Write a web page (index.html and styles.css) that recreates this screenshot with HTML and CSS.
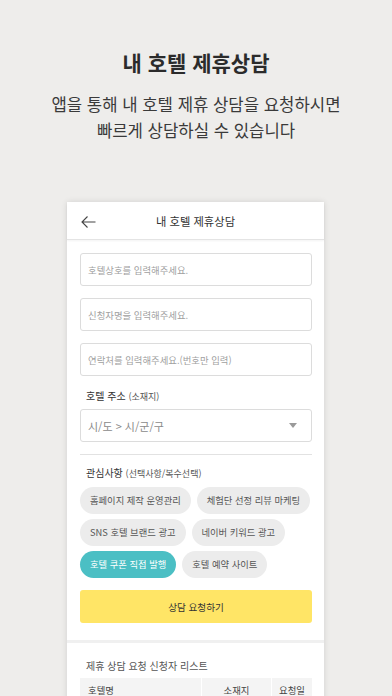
FILE: index.html
```html
<!DOCTYPE html>
<html lang="ko">
<head>
    <meta charset="UTF-8">
    <meta name="viewport" content="width=device-width, initial-scale=1.0">
    <title>내 호텔 제휴상담</title>
    <link rel="stylesheet" href="styles.css">
</head>
<body>
    <div class="intro">
        <h1>내 호텔 제휴상담</h1>
        <p>앱을 통해 내 호텔 제휴 상담을 요청하시면<br>빠르게 상담하실 수 있습니다</p>
    </div>

    <div class="phone">
        <div class="phone-header">
            <svg class="back" width="15" height="12" viewBox="0 0 15 12">
                <path d="M14.5 6H1M6.5 0.5L1 6l5.5 5.5" fill="none" stroke="#444" stroke-width="1.1"/>
            </svg>
            <span>내 호텔 제휴상담</span>
        </div>

        <div class="form">
            <div class="field">호텔상호를 입력해주세요.</div>
            <div class="field">신청자명을 입력해주세요.</div>
            <div class="field">연락처를 입력해주세요.(번호만 입력)</div>

            <div class="label">호텔 주소 <small>(소재지)</small></div>
            <div class="field select">
                <span>시/도 &gt; 시/군/구</span>
                <svg width="8" height="5" viewBox="0 0 8 5"><path d="M0 0h8L4 5z" fill="#9a9a9a"/></svg>
            </div>

            <div class="divider"></div>

            <div class="label">관심사항 <small>(선택사항/복수선택)</small></div>
            <div class="chips">
                <span class="chip">홈페이지 제작 운영관리</span>
                <span class="chip">체험단 선정 리뷰 마케팅</span>
                <span class="chip">SNS 호텔 브랜드 광고</span>
                <span class="chip">네이버 키워드 광고</span>
                <span class="chip active">호텔 쿠폰 직접 발행</span>
                <span class="chip">호텔 예약 사이트</span>
            </div>

            <button class="submit">상담 요청하기</button>
        </div>

        <div class="list">
            <div class="list-title">제휴 상담 요청 신청자 리스트</div>
            <div class="table">
                <div class="th name">호텔명</div>
                <div class="th place">소재지</div>
                <div class="th date">요청일</div>
            </div>
        </div>
    </div>
</body>
</html>
```

FILE: styles.css
```css
body {
    margin: 0;
    background: #eeedeb;
    font-family: "Noto Sans CJK KR", "Noto Sans", sans-serif;
    color: #333;
    height: 696px;
    overflow: hidden;
}

.intro {
    text-align: center;
    padding-top: 46px;
}

.intro h1 {
    margin: 0;
    font-size: 21px;
    line-height: 32px;
    font-weight: 700;
    color: #2b2b2b;
}

.intro p {
    margin: 13px 0 0;
    font-size: 16.7px;
    line-height: 26px;
    color: #3a3a3a;
}

.phone {
    width: 257px;
    margin: 59px 0 0 67px;
    background: #fff;
    box-shadow: 0 0 6px rgba(0, 0, 0, 0.12);
    height: 560px;
}

.phone-header {
    height: 37px;
    border-bottom: 1px solid #e4e4e4;
    box-shadow: 0 1px 2px rgba(0, 0, 0, 0.05);
    display: flex;
    align-items: center;
    justify-content: center;
    position: relative;
    font-size: 11.3px;
    color: #333;
}

.back {
    position: absolute;
    left: 14px;
    top: 14px;
}

.form {
    padding: 13px 12px 17px 13px;
    display: flex;
    flex-direction: column;
}

.field {
    height: 31px;
    border: 1px solid #dcdcdc;
    border-radius: 3px;
    margin-bottom: 12px;
    padding: 0 7px;
    display: flex;
    align-items: center;
    font-size: 9.4px;
    color: #a0a0a0;
}

.select {
    justify-content: space-between;
    font-size: 11px;
    color: #8a8a8a;
    padding-right: 14px;
}

.label {
    font-size: 10px;
    line-height: 16px;
    color: #333;
    margin: 0 0 4px 6px;
}

.label small {
    font-size: 9px;
    color: #555;
}

.divider {
    height: 1px;
    background: #e2e2e2;
    margin-bottom: 10px;
}

.divider + .label {
    margin-bottom: 5px;
}

.chips {
    display: flex;
    flex-wrap: wrap;
    gap: 5px 6px;
    margin-bottom: 12px;
}

.chip {
    height: 27px;
    line-height: 27px;
    padding: 0 10px;
    border-radius: 14px;
    background: #ececec;
    font-size: 9.3px;
    color: #555;
}

.chip.active {
    background: #4bbfc4;
    color: #fff;
}

.submit {
    height: 33px;
    border: none;
    border-radius: 3px;
    background: #ffe566;
    font-family: inherit;
    font-size: 9.6px;
    color: #333;
}

.list {
    border-top: 3px solid #f0f0f0;
    padding: 15px 12px 0 13px;
}

.list-title {
    font-size: 10px;
    line-height: 16px;
    color: #555;
    margin: 0 0 4px 6px;
}

.table {
    display: flex;
    background: #f4f4f4;
    height: 30px;
    font-size: 9.4px;
    color: #444;
}

.th {
    line-height: 24px;
    padding-top: 0;
    border-right: 1px solid #fff;
    text-align: center;
}

.name {
    width: 122px;
    text-align: left;
    padding-left: 8px;
    box-sizing: border-box;
}

.place {
    width: 69px;
}

.date {
    flex: 1;
    border-right: none;
}
```
